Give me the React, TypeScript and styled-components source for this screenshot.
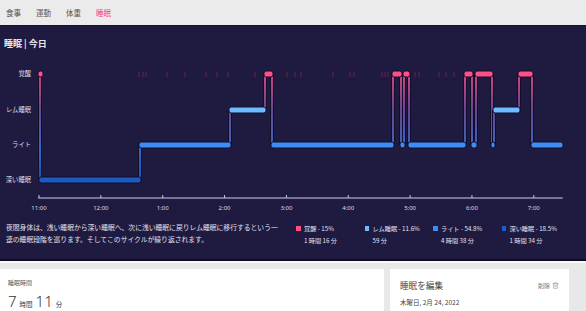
import React from 'react';
import styled, { createGlobalStyle } from 'styled-components';
import { Trash2 } from 'lucide-react';

type Stage = 'wake' | 'rem' | 'light' | 'deep';

interface ISegment {
  stage: Stage;
  x0: number;
  x1: number;
}

interface ILegendItem {
  stage: Stage;
  label: string;
  duration: string;
}

const GlobalStyle = createGlobalStyle`
  html, body {
    margin: 0;
    padding: 0;
    overflow: hidden;
    background: #e8e8e8;
    font-family: "Noto Sans CJK JP", "Noto Sans", sans-serif;
  }
`;

const stageColor: Record<Stage, string> = {
  wake: '#ff4f86',
  rem: '#6cbcff',
  light: '#3d8df5',
  deep: '#1c5bc4',
};

const stageY: Record<Stage, number> = {
  wake: 75,
  rem: 111,
  light: 146,
  deep: 181,
};

const X0 = 39;
const PX_PER_HOUR = 61.85;

const hourLabels = ['11:00', '12:00', '1:00', '2:00', '3:00', '4:00', '5:00', '6:00', '7:00'];

const yLabels: Array<{ stage: Stage; text: string }> = [
  { stage: 'wake', text: '覚醒' },
  { stage: 'rem', text: 'レム睡眠' },
  { stage: 'light', text: 'ライト' },
  { stage: 'deep', text: '深い睡眠' },
];

const segments: Array<ISegment> = [
  { stage: 'wake', x0: 39, x1: 42 },
  { stage: 'deep', x0: 40, x1: 140 },
  { stage: 'light', x0: 140, x1: 230 },
  { stage: 'rem', x0: 230, x1: 265 },
  { stage: 'wake', x0: 265, x1: 272 },
  { stage: 'light', x0: 272, x1: 393 },
  { stage: 'wake', x0: 393, x1: 401 },
  { stage: 'light', x0: 401, x1: 404 },
  { stage: 'wake', x0: 404, x1: 409 },
  { stage: 'light', x0: 409, x1: 465 },
  { stage: 'wake', x0: 465, x1: 472 },
  { stage: 'light', x0: 472, x1: 476 },
  { stage: 'wake', x0: 476, x1: 492 },
  { stage: 'light', x0: 492, x1: 494 },
  { stage: 'rem', x0: 494, x1: 519 },
  { stage: 'wake', x0: 519, x1: 532 },
  { stage: 'light', x0: 532, x1: 562 },
];

const restlessTicks = [
  139, 143, 146, 167, 185, 206, 217, 228, 255, 287, 295, 301, 333, 350, 354,
  382, 385, 388, 415, 419, 439, 446, 454,
];

const legendItems: Array<ILegendItem> = [
  { stage: 'wake', label: '覚醒 - 15%', duration: '1 時間 16 分' },
  { stage: 'rem', label: 'レム睡眠 - 11.6%', duration: '59 分' },
  { stage: 'light', label: 'ライト - 54.8%', duration: '4 時間 38 分' },
  { stage: 'deep', label: '深い睡眠 - 18.5%', duration: '1 時間 34 分' },
];

const Page = styled.div`
  width: 586px;
  height: 311px;
  overflow: hidden;
`;

const NavBar = styled.nav`
  height: 25px;
  background: #ebebeb;
  display: flex;
  align-items: center;
  padding-left: 6px;
  gap: 16px;
`;

const Tab = styled.span<{ $active?: boolean }>`
  font-size: 7.5px;
  color: ${(p) => (p.$active ? '#f0457d' : '#555')};
  width: 14px;
  white-space: nowrap;
`;

const ChartPanel = styled.section`
  height: 236px;
  box-sizing: border-box;
  background: #1f1a40;
  border-top: 1px solid #15112e;
  border-bottom: 2px solid #0f0c24;
  box-shadow: 0 2px 0 #f8f8f8;
  display: flex;
  flex-direction: column;
`;

const PanelTitle = styled.h2`
  margin: 0;
  padding: 11px 0 0 4px;
  height: 18px;
  font-size: 9px;
  font-weight: 700;
  color: #e4e3ef;
`;

const ChartSvg = styled.svg`
  display: block;
`;

const Footer = styled.div`
  display: flex;
  padding: 6px 0 0 6px;
`;

const Description = styled.p`
  margin: 0;
  width: 290px;
  font-size: 6.8px;
  line-height: 12px;
  color: #e2e1ee;
`;

const Legend = styled.div`
  display: flex;
  padding-top: 3px;
`;

const LegendEntry = styled.div`
  width: 68.5px;
  display: grid;
  grid-template-columns: 8px auto;
  row-gap: 3px;
  align-items: center;
  font-size: 6.2px;
  color: #e2e1ee;
`;

const Swatch = styled.span<{ $stage: Stage }>`
  width: 4.5px;
  height: 4.5px;
  background: ${(p) => stageColor[p.$stage]};
`;

const Duration = styled.span`
  grid-column: 2;
`;

const Cards = styled.div`
  display: flex;
  gap: 6px;
  margin-top: 8px;
  padding-right: 17px;
`;

const Card = styled.div<{ $width?: number }>`
  background: #fff;
  height: 48px;
  box-sizing: border-box;
  ${(p) => (p.$width ? `width: ${p.$width}px;` : 'flex: 1;')}
  padding: ${(p) => (p.$width ? '10px 10px' : '9px 8px')};
`;

const CardLabel = styled.div`
  font-size: 6px;
  color: #555;
`;

const BigValue = styled.div`
  margin-top: 4px;
  color: #333;
  display: flex;
  align-items: baseline;
  gap: 3px;
`;

const Num = styled.span`
  font-family: "Noto Sans", sans-serif;
  font-weight: 300;
  font-size: 15px;
`;

const Unit = styled.span`
  font-size: 6.5px;
`;

const CardHeader = styled.div`
  display: flex;
  justify-content: space-between;
  align-items: center;
`;

const CardTitle = styled.div`
  font-size: 8.6px;
  color: #444;
`;

const DeleteLink = styled.span`
  display: flex;
  align-items: center;
  gap: 2px;
  font-size: 6px;
  color: #777;
`;

const DateText = styled.div`
  margin-top: 6px;
  font-size: 6.5px;
  color: #444;
`;

const Hypnogram: React.FunctionComponent = () => {
  const outline = '#120e2c';
  return (
    <ChartSvg width={586} height={160} viewBox='0 56 586 160'>
      <defs>
        <linearGradient id='stageFade' gradientUnits='userSpaceOnUse' x1={0} y1={75} x2={0} y2={181}>
          <stop offset='0' stopColor='#e84a82' />
          <stop offset='0.35' stopColor='#6f4c9c' />
          <stop offset='0.7' stopColor='#3a72d8' />
          <stop offset='1' stopColor='#1c5bc4' />
        </linearGradient>
      </defs>

      {yLabels.map((l) => (
        <text
          key={l.stage}
          x={31}
          y={stageY[l.stage] + 2}
          textAnchor='end'
          fontSize={6.3}
          fill='#dddce8'
          fontFamily='"Noto Sans CJK JP", sans-serif'
        >
          {l.text}
        </text>
      ))}

      {restlessTicks.map((x) => (
        <line key={x} x1={x} x2={x} y1={73} y2={78} stroke='#64244f' strokeWidth={1.1} />
      ))}

      {segments.slice(1).map((seg, i) => {
        const prev = segments[i];
        const ya = Math.min(stageY[prev.stage], stageY[seg.stage]);
        const yb = Math.max(stageY[prev.stage], stageY[seg.stage]);
        const x = seg.x0;
        return (
          <g key={`c${i}`}>
            <line x1={x} x2={x} y1={ya} y2={yb} stroke={outline} strokeWidth={4} />
            <line x1={x} x2={x} y1={ya} y2={yb} stroke='url(#stageFade)' strokeWidth={1.8} />
          </g>
        );
      })}

      {segments.map((seg, i) => (
        <rect
          key={`s${i}`}
          x={seg.x0 - 1}
          y={stageY[seg.stage] - 3}
          width={seg.x1 - seg.x0 + 2}
          height={6}
          rx={2.2}
          fill={stageColor[seg.stage]}
          stroke={outline}
          strokeWidth={1}
        />
      ))}

      <line x1={X0} x2={562} y1={199} y2={199} stroke='#77739a' strokeWidth={2} strokeLinecap='round' />
      {hourLabels.map((h, i) => {
        const x = X0 + i * PX_PER_HOUR;
        return (
          <g key={h}>
            <line x1={x} x2={x} y1={196} y2={199} stroke='#c8c6dc' strokeWidth={1} />
            <text
              x={x}
              y={211}
              textAnchor='middle'
              fontSize={6}
              fill='#dddce8'
              fontFamily='"Noto Sans", sans-serif'
            >
              {h}
            </text>
          </g>
        );
      })}
    </ChartSvg>
  );
};

const App: React.FunctionComponent = () => {
  return (
    <Page>
      <GlobalStyle />
      <NavBar>
        <Tab>食事</Tab>
        <Tab>運動</Tab>
        <Tab>体重</Tab>
        <Tab $active>睡眠</Tab>
      </NavBar>
      <ChartPanel>
        <PanelTitle>睡眠 | 今日</PanelTitle>
        <Hypnogram />
        <Footer>
          <Description>
            夜間身体は、浅い睡眠から深い睡眠へ、次に浅い睡眠に戻りレム睡眠に移行するという一
            <br />
            連の睡眠段階を巡ります。そしてこのサイクルが繰り返されます。
          </Description>
          <Legend>
            {legendItems.map((item) => (
              <LegendEntry key={item.stage}>
                <Swatch $stage={item.stage} />
                <span>{item.label}</span>
                <Duration>{item.duration}</Duration>
              </LegendEntry>
            ))}
          </Legend>
        </Footer>
      </ChartPanel>
      <Cards>
        <Card>
          <CardLabel>睡眠時間</CardLabel>
          <BigValue>
            <Num>7</Num>
            <Unit>時間</Unit>
            <Num>11</Num>
            <Unit>分</Unit>
          </BigValue>
        </Card>
        <Card $width={179}>
          <CardHeader>
            <CardTitle>睡眠を編集</CardTitle>
            <DeleteLink>
              削除 <Trash2 size={7} strokeWidth={1.5} />
            </DeleteLink>
          </CardHeader>
          <DateText>木曜日, 2月 24, 2022</DateText>
        </Card>
      </Cards>
    </Page>
  );
};

export default App;
